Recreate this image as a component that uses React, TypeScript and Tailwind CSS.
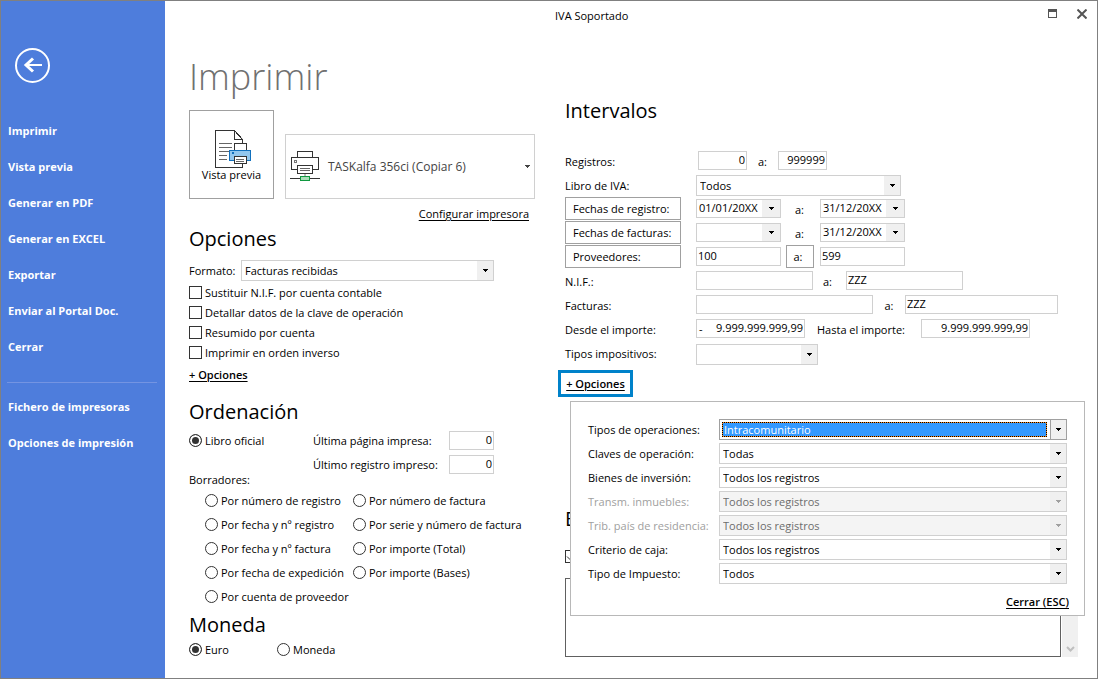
import React, { useId } from 'react';

const sidebarMain = [
  'Imprimir',
  'Vista previa',
  'Generar en PDF',
  'Generar en EXCEL',
  'Exportar',
  'Enviar al Portal Doc.',
  'Cerrar',
];
const sidebarExtra = ['Fichero de impresoras', 'Opciones de impresión'];

const printOptions = [
  'Sustituir N.I.F. por cuenta contable',
  'Detallar datos de la clave de operación',
  'Resumido por cuenta',
  'Imprimir en orden inverso',
];

const draftsLeft = [
  'Por número de registro',
  'Por fecha y nº registro',
  'Por fecha y nº factura',
  'Por fecha de expedición',
  'Por cuenta de proveedor',
];
const draftsRight = [
  'Por número de factura',
  'Por serie y número de factura',
  'Por importe (Total)',
  'Por importe (Bases)',
];

const extraFilters = [
  { label: 'Tipos de operaciones:', value: 'Intracomunitario', active: true },
  { label: 'Claves de operación:', value: 'Todas' },
  { label: 'Bienes de inversión:', value: 'Todos los registros' },
  { label: 'Transm. inmuebles:', value: 'Todos los registros', disabled: true },
  { label: 'Trib. país de residencia:', value: 'Todos los registros', disabled: true },
  { label: 'Criterio de caja:', value: 'Todos los registros' },
  { label: 'Tipo de Impuesto:', value: 'Todos' },
];

function Arrow() {
  return (
    <svg width="5" height="3" viewBox="0 0 5 3" fill="currentColor" shapeRendering="crispEdges">
      <path d="M0 0h5v1H0zM1 1h3v1H1zM2 2h1v1H2z" />
    </svg>
  );
}

type ComboProps = {
  id?: string;
  label?: string;
  value: string;
  className?: string;
  active?: boolean;
  disabled?: boolean;
};

function Combo({ id, label, value, className = '', active, disabled }: ComboProps) {
  return (
    <div
      className={`relative flex h-[21px] shrink-0 border ${active ? 'border-[#a0a0a0] p-0.5' : 'border-[#d0d0d0]'} ${
        disabled ? 'bg-[#f4f4f4] text-[#6d6d6d]' : 'bg-white'
      } ${className}`}
    >
      <select
        id={id}
        aria-label={label}
        disabled={disabled}
        defaultValue={value}
        className={`min-w-0 flex-1 appearance-none opacity-100 outline-none ${
          active
            ? 'mr-[17px] border border-dotted border-black bg-[#ff8c1a] pl-px leading-[13px] text-white shadow-[inset_0_0_0_20px_#3399ff]'
            : 'pl-[3px] pr-4 leading-4'
        }`}
      >
        <option>{value}</option>
      </select>
      <span
        className={`pointer-events-none absolute inset-y-0 right-0 flex w-4 items-center justify-center bg-[#f0f0f0] ${
          active ? 'border-l border-[#a0a0a0]' : ''
        } ${disabled ? 'text-[#a0a0a0]' : 'text-black'}`}
      >
        <Arrow />
      </span>
    </div>
  );
}

function Field({ id, label, value = '', className = '' }: { id?: string; label?: string; value?: string; className?: string }) {
  return (
    <input
      id={id}
      aria-label={label}
      type="text"
      defaultValue={value}
      className={`mb-px h-[19px] shrink-0 border border-[#d0d0d0] bg-white px-px pb-0.5 outline-none ${className}`}
    />
  );
}

function DateField({ label, value = '' }: { label: string; value?: string }) {
  return (
    <div className="mb-px flex h-[19px] w-[85px] shrink-0 border border-[#d0d0d0]">
      <input aria-label={label} type="text" defaultValue={value} className="w-[65px] pb-px pl-0.5 outline-none" />
      <button type="button" aria-label={`Abrir ${label}`} className="flex flex-1 items-center justify-center bg-[#f0f0f0]">
        <Arrow />
      </button>
    </div>
  );
}

function Check({ label }: { label: string }) {
  return (
    <label className="flex h-5 items-center gap-[3px]">
      <input type="checkbox" className="mb-px size-[13px] appearance-none border border-[#333] bg-white" />
      {label}
    </label>
  );
}

function Radio({ label, name, checked, className = '' }: { label: string; name: string; checked?: boolean; className?: string }) {
  return (
    <label className={`flex h-6 items-center gap-[3px] whitespace-nowrap ${className}`}>
      <input
        type="radio"
        name={name}
        defaultChecked={checked}
        className="mb-px size-[13px] shrink-0 appearance-none rounded-full border border-[#333] bg-white checked:bg-[#333] checked:shadow-[inset_0_0_0_2px_white]"
      />
      {label}
    </label>
  );
}

function Row({ label, htmlFor, children }: { label: string; htmlFor?: string; children: React.ReactNode }) {
  return (
    <div className="flex h-6 items-center">
      <label htmlFor={htmlFor} className="w-[131px] shrink-0 whitespace-nowrap pt-0.5">
        {label}
      </label>
      {children}
    </div>
  );
}

function ButtonRow({ label, children }: { label: string; children: React.ReactNode }) {
  return (
    <div className="flex h-6 items-center">
      <button
        type="button"
        className="mb-px mr-[15px] h-[23px] w-[116px] shrink-0 border border-[#a0a0a0] pl-[7px] pt-px text-left"
      >
        {label}
      </button>
      {children}
    </div>
  );
}

function PreviewIcon() {
  return (
    <svg width="40" height="38" viewBox="-2 0 40 38" fill="none" shapeRendering="crispEdges">
      <path d="M1.5 .5H20.5L28.5 9.5V37.5H1.5Z" fill="#fff" stroke="#333" />
      <path d="M20.5 .5V9.5H28.5" stroke="#333" />
      <path d="M20.5 .5L28.5 9.5" stroke="#333" shapeRendering="auto" />
      <path d="M5 13.5H18M5 17.5H18M5 21.5H15M5 25.5H13M5 29.5H13" stroke="#666" />
      <path d="M20.5 20V13.5H32.5V20" fill="#fff" stroke="#333" />
      <path d="M15.5 20.5H36.5V30.5H15.5Z" fill="#92c7ee" stroke="#1170bd" />
      <path d="M18 22h2v2h-2z" fill="#1170bd" />
      <path d="M20.5 26.5H32.5V33.5H20.5Z" fill="#fff" stroke="#333" />
      <path d="M22 29.5H30M22 31.5H30" stroke="#666" />
    </svg>
  );
}

function NetworkPrinterIcon() {
  return (
    <svg width="30" height="31" viewBox="0 0 30 31" fill="none" shapeRendering="crispEdges">
      <path d="M7.5 6V.5H22.5V6" stroke="#333" />
      <path d="M7 18.5H1.5V6.5H28.5V18.5H22" stroke="#333" />
      <path d="M4.5 9.5H6.5V11.5H4.5Z" stroke="#777" />
      <path d="M7.5 14.5H22.5V22.5H7.5Z" fill="#fff" stroke="#333" />
      <path d="M10 17.5H20M10 19.5H20" stroke="#666" />
      <path d="M14 23H16V25H14Z" fill="#bbb" />
      <path d="M0 27.5H10M20 27.5H30" stroke="#333" />
      <path d="M10.5 25.5H19.5V29.5H10.5Z" fill="#a9ddb8" stroke="#109840" />
    </svg>
  );
}

function Sidebar() {
  const item = 'flex h-9 items-center whitespace-nowrap px-[7px] text-left';
  return (
    <aside className="w-[164px] shrink-0 bg-[#4e7ddc] font-bold text-white">
      <button type="button" aria-label="Volver" className="mb-[30px] ml-3.5 mt-[47px] block">
        <svg width="35" height="35" viewBox="0 0 35 35" fill="none" stroke="#fff">
          <circle cx="17.5" cy="17.5" r="16.5" strokeWidth="2" />
          <path d="M27 17H11" strokeWidth="2" />
          <path d="M18 10.5L11 17L18 23.5" strokeWidth="3" />
        </svg>
      </button>
      <nav className="flex flex-col">
        {sidebarMain.map((text) => (
          <button key={text} type="button" className={item}>
            {text}
          </button>
        ))}
        <hr className="mb-[6px] ml-1.5 mr-2 mt-[17px] border-[#7494e2]" />
        {sidebarExtra.map((text) => (
          <button key={text} type="button" className={item}>
            {text}
          </button>
        ))}
      </nav>
    </aside>
  );
}

function PrintSetup() {
  const id = useId();
  return (
    <section className="w-[376px] shrink-0">
      <h1 className="mt-[22px] h-12 text-[36px] font-light leading-[48px] text-[#707070]">Imprimir</h1>
      <div className="mt-[9px] flex items-end gap-[11px]">
        <button
          type="button"
          className="flex h-[89px] w-[85px] flex-col items-center justify-start border border-[#a0a0a0] pt-[19px] leading-[14px]"
        >
          <PreviewIcon />
          Vista previa
        </button>
        <button
          type="button"
          className="flex h-[65px] w-[250px] items-center border border-[#d0d0d0] pl-1 pr-1 text-[12px] text-[#444]"
        >
          <NetworkPrinterIcon />
          <span className="ml-2 flex-1 text-left">TASKalfa 356ci (Copiar 6)</span>
          <Arrow />
        </button>
      </div>
      <div className="mt-1.5 flex w-[340px] justify-end leading-[18px]">
        <a href="#impresora" className="underline underline-offset-2">
          Configurar impresora
        </a>
      </div>

      <h2 className="mt-0.5 text-[20px] leading-7">Opciones</h2>
      <div className="mb-0.5 mt-[7px] flex w-[305px] items-center">
        <label htmlFor={`${id}-formato`} className="w-[52px]">
          Formato:
        </label>
        <Combo id={`${id}-formato`} value="Facturas recibidas" className="flex-1" />
      </div>
      {printOptions.map((label) => (
        <Check key={label} label={label} />
      ))}
      <button type="button" className="mt-0.5 block h-5 font-semibold underline underline-offset-2">
        + Opciones
      </button>

      <h2 className="mt-[13px] text-[20px] leading-7">Ordenación</h2>
      <div className="mt-[3px] flex">
        <Radio name="orden" label="Libro oficial" checked className="w-[124px]" />
        <div>
          <div className="flex h-6 items-center">
            <label htmlFor={`${id}-pagina`} className="w-[136px]">
              Última página impresa:
            </label>
            <Field id={`${id}-pagina`} value="0" className="w-[45px] text-right" />
          </div>
          <div className="flex h-6 items-center">
            <label htmlFor={`${id}-registro`} className="w-[136px]">
              Último registro impreso:
            </label>
            <Field id={`${id}-registro`} value="0" className="w-[45px] text-right" />
          </div>
        </div>
      </div>
      <p className="-mt-[5px] mb-px h-4 leading-4">Borradores:</p>
      <div className="ml-4 flex">
        <div className="w-[148px]">
          {draftsLeft.map((label) => (
            <Radio key={label} name="orden" label={label} />
          ))}
        </div>
        <div>
          {draftsRight.map((label) => (
            <Radio key={label} name="orden" label={label} />
          ))}
        </div>
      </div>

      <h2 className="mt-0.5 text-[20px] leading-7">Moneda</h2>
      <div className="-mt-px flex">
        <Radio name="moneda" label="Euro" checked className="w-[88px]" />
        <Radio name="moneda" label="Moneda" />
      </div>
    </section>
  );
}

function ExtraOptions() {
  const id = useId();
  return (
    <div
      role="dialog"
      aria-label="Opciones"
      className="absolute left-[12px] top-[31px] z-10 w-[515px] border border-[#b8b8b8] bg-white px-[17px] pb-[3px] pt-4"
    >
      {extraFilters.map(({ label, value, active, disabled }, i) => (
        <div key={label} className="flex h-6 items-center">
          <label htmlFor={`${id}-${i}`} className={`w-[131px] shrink-0 whitespace-nowrap ${disabled ? 'text-[#a0a0a0]' : ''}`}>
            {label}
          </label>
          <Combo id={`${id}-${i}`} value={value} active={active} disabled={disabled} className="mb-px flex-1" />
        </div>
      ))}
      <div className="-mr-0.5 mt-1.5 flex justify-end leading-5">
        <button type="button" className="font-semibold underline underline-offset-2">
          Cerrar (ESC)
        </button>
      </div>
    </div>
  );
}

function Intervals() {
  const id = useId();
  return (
    <section className="min-w-0 flex-1">
      <h2 className="mt-[66px] text-[20px] leading-7">Intervalos</h2>
      <div className="mt-6">
        <Row label="Registros:" htmlFor={`${id}-reg`}>
          <Field id={`${id}-reg`} value="0" className="ml-0.5 w-[49px] text-right" />
          <span className="w-[31px] pt-0.5 text-center">a:</span>
          <Field label="Hasta registro" value="999999" className="w-[49px] text-right" />
        </Row>
        <Row label="Libro de IVA:" htmlFor={`${id}-libro`}>
          <Combo id={`${id}-libro`} value="Todos" className="mt-px w-[205px]" />
        </Row>
        <ButtonRow label="Fechas de registro:">
          <DateField label="Desde fecha de registro" value="01/01/20XX" />
          <span className="w-[39px] pr-0.5 pt-0.5 text-center">a:</span>
          <DateField label="Hasta fecha de registro" value="31/12/20XX" />
        </ButtonRow>
        <ButtonRow label="Fechas de facturas:">
          <DateField label="Desde fecha de factura" />
          <span className="w-[39px] pr-0.5 pt-0.5 text-center">a:</span>
          <DateField label="Hasta fecha de factura" value="31/12/20XX" />
        </ButtonRow>
        <ButtonRow label="Proveedores:">
          <Field label="Desde proveedor" value="100" className="w-[85px]" />
          <button type="button" className="mb-px ml-[5px] mr-1.5 h-[23px] w-7 border border-[#a0a0a0] pr-1 pt-px">
            a:
          </button>
          <Field label="Hasta proveedor" value="599" className="w-[85px]" />
        </ButtonRow>
        <Row label="N.I.F.:" htmlFor={`${id}-nif`}>
          <Field id={`${id}-nif`} className="w-[117px]" />
          <span className="w-[33px] pr-1 pt-0.5 text-center">a:</span>
          <Field label="Hasta N.I.F." value="ZZZ" className="w-[117px]" />
        </Row>
        <Row label="Facturas:" htmlFor={`${id}-fac`}>
          <Field id={`${id}-fac`} className="w-[177px]" />
          <span className="w-8 pt-0.5 text-center">a:</span>
          <Field label="Hasta factura" value="ZZZ" className="w-[153px]" />
        </Row>
        <Row label="Desde el importe:" htmlFor={`${id}-desde`}>
          <div className="mb-px flex h-[19px] w-[109px] items-center border border-[#d0d0d0] pl-0.5">
            <span>-</span>
            <input
              id={`${id}-desde`}
              type="text"
              defaultValue="9.999.999.999,99"
              className="min-w-0 flex-1 pb-0.5 pr-px text-right outline-none"
            />
          </div>
          <label htmlFor={`${id}-hasta`} className="ml-3 w-[104px] pt-0.5">
            Hasta el importe:
          </label>
          <Field id={`${id}-hasta`} value="9.999.999.999,99" className="w-[109px] text-right" />
        </Row>
        <Row label="Tipos impositivos:" htmlFor={`${id}-tipos`}>
          <Combo id={`${id}-tipos`} value="" className="mt-[3px] w-[122px]" />
        </Row>
      </div>

      <div className="relative -ml-[7px] mt-[5px]">
        <button
          type="button"
          className="block h-[27px] w-[75px] border-3 border-[#0082ca] font-semibold underline underline-offset-2"
        >
          + Opciones
        </button>
        <ExtraOptions />
      </div>

      <h2 className="mt-[108px] text-[20px] leading-7">E</h2>
      <label className="mt-[17px] grid size-[13px]">
        <input
          type="checkbox"
          defaultChecked
          aria-label="Activar texto"
          className="col-start-1 row-start-1 appearance-none border border-[#333] bg-white"
        />
        <svg viewBox="0 0 13 13" fill="none" stroke="#333" className="col-start-1 row-start-1">
          <path d="M2 6.5L5 9.5L11 3.5" />
        </svg>
      </label>
      <div className="mt-[15px] flex h-[79px] gap-px">
        <textarea aria-label="Texto" className="min-w-0 flex-1 resize-none border border-[#606060] outline-none" />
        <div className="flex w-4 items-end justify-center bg-[#f0f0f0] pb-1">
          <svg width="9" height="8" viewBox="0 0 9 8" fill="none" stroke="#bfbfbf" strokeWidth="2">
            <path d="M1 2L4.5 5.5L8 2" />
          </svg>
        </div>
      </div>
    </section>
  );
}

export default function App() {
  return (
    <div className="flex min-h-screen border border-[#808080] bg-white font-['Open_Sans','Noto_Sans',sans-serif] text-[11px] leading-4 text-black">
      <Sidebar />
      <main className="min-w-0 flex-1">
        <header className="flex h-[30px] items-center pr-2.5">
          <h1 className="flex-1 pl-[390px]">IVA Soportado</h1>
          <button type="button" aria-label="Maximizar" className="mb-[5px]">
            <svg width="9" height="9" viewBox="0 0 9 9" shapeRendering="crispEdges">
              <path d="M.5 .5H8.5V8.5H.5Z" fill="#fff" stroke="#555" />
              <path d="M0 0H9V3H0Z" fill="#555" />
            </svg>
          </button>
          <button type="button" aria-label="Cerrar ventana" className="mb-[5px] ml-5">
            <svg width="10" height="10" viewBox="0 0 10 10" stroke="#555" strokeWidth="2">
              <path d="M.5 .5L9.5 9.5M9.5 .5L.5 9.5" />
            </svg>
          </button>
        </header>
        <div className="flex pl-6 pr-[19px]">
          <PrintSetup />
          <Intervals />
        </div>
      </main>
    </div>
  );
}
